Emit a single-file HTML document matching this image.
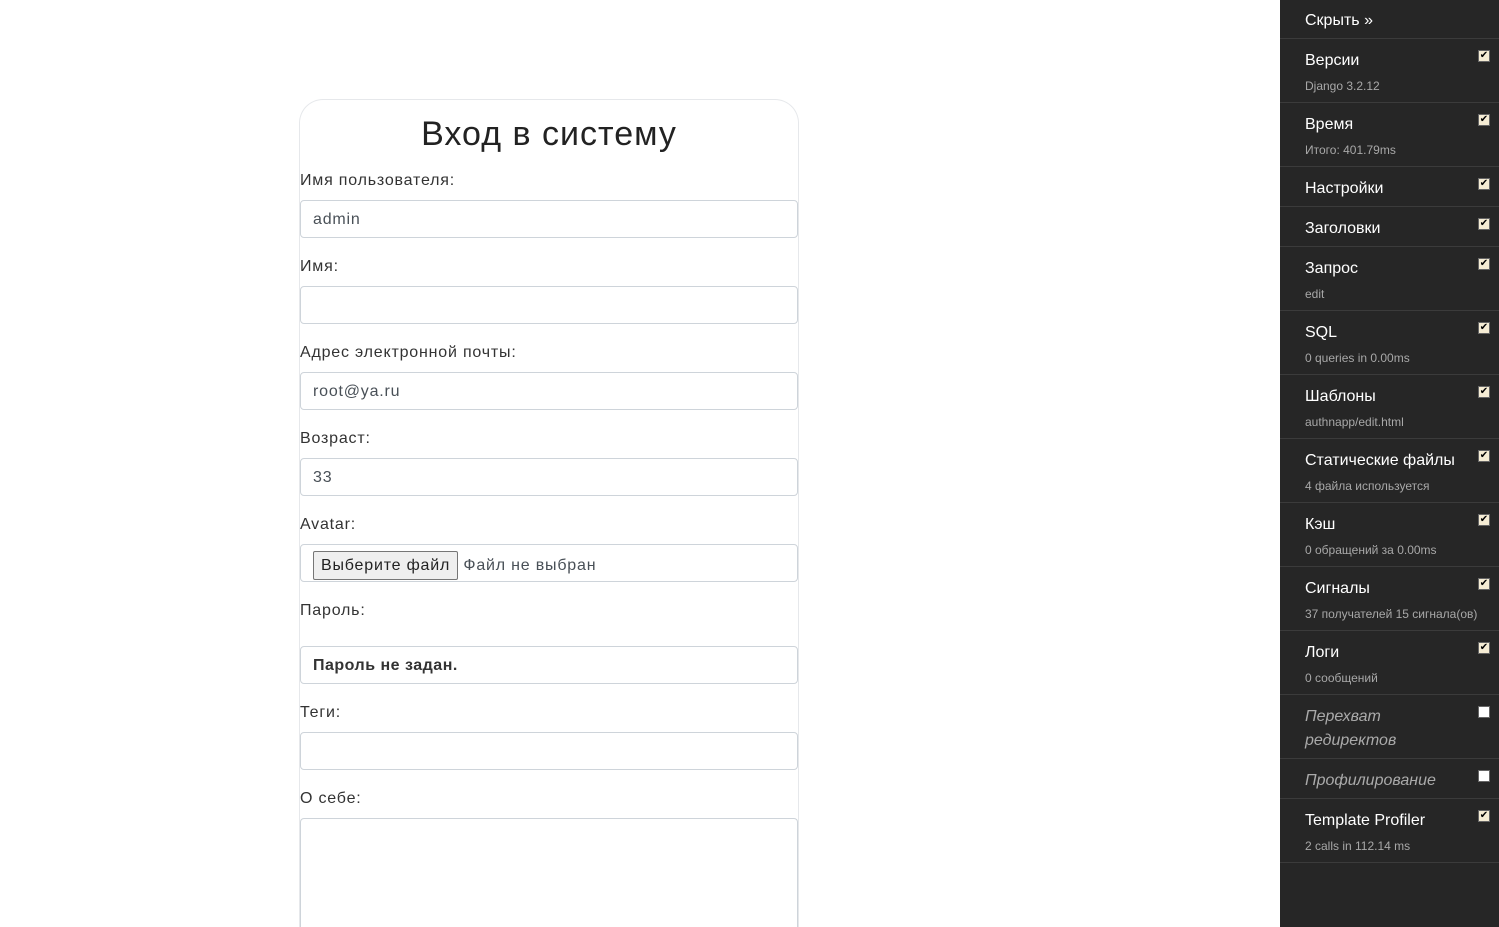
<!DOCTYPE html>
<html><head><meta charset="utf-8"><style>
*{box-sizing:border-box;margin:0;padding:0}
html,body{width:1499px;height:927px;overflow:hidden}
body{background:#fff;font-family:"Liberation Sans",sans-serif;position:relative}
.card{position:absolute;left:299px;top:99px;width:500px;height:828px;border:1px solid #e6e8eb;border-bottom:none;border-radius:24px 24px 0 0}
h1{position:absolute;left:299px;width:500px;top:113px;text-align:center;font-weight:400;font-size:34px;letter-spacing:1px;color:#222;line-height:42px}
.lbl{position:absolute;left:300px;font-size:16px;letter-spacing:0.8px;color:#333;line-height:24px}
.inp{position:absolute;left:300px;width:498px;height:38px;border:1px solid #ced4da;border-radius:4px;background:#fff;font-size:16px;letter-spacing:0.8px;color:#495057;padding-left:12px;line-height:38px}
.btn{display:inline-block;margin-top:6px;height:29px;border:1px solid #767676;border-radius:2px;background:#efefef;color:#222;padding:0 7px;line-height:27px;vertical-align:top}
.sb{position:absolute;left:1280px;top:0;width:219px;height:927px;background:#262626;color:#fff}
.row{position:absolute;left:0;width:219px;border-bottom:1px solid #3b3b3b}
.t{position:absolute;left:25px;font-size:16px;line-height:24px;color:#fff}
.s{position:absolute;left:25px;font-size:12px;color:#a8a8a8;line-height:16px}
.cb{position:absolute;left:198px;width:12px;height:12px;background:#f5ecd4;border:1px solid #666;font-size:10px;line-height:10px;text-align:center;color:#000}
.cb.e{background:#fff}
.i{font-style:italic;color:#aaa}
</style></head><body>
<div class="card"></div>
<h1>Вход в систему</h1>
<div class="lbl" style="top:169px">Имя пользователя:</div>
<div class="inp" style="top:200px">admin</div>
<div class="lbl" style="top:255px">Имя:</div>
<div class="inp" style="top:286px"></div>
<div class="lbl" style="top:341px">Адрес электронной почты:</div>
<div class="inp" style="top:372px">root@ya.ru</div>
<div class="lbl" style="top:427px">Возраст:</div>
<div class="inp" style="top:458px">33</div>
<div class="lbl" style="top:513px">Avatar:</div>
<div class="inp" style="top:544px;line-height:normal"><span class="btn">Выберите файл</span> <span style="display:inline-block;margin-top:6px;line-height:29px">Файл не выбран</span></div>
<div class="lbl" style="top:599px">Пароль:</div>
<div class="inp" style="top:646px;font-weight:bold;color:#333;letter-spacing:0.5px">Пароль не задан.</div>
<div class="lbl" style="top:701px">Теги:</div>
<div class="inp" style="top:732px"></div>
<div class="lbl" style="top:787px">О себе:</div>
<div class="inp" style="top:818px;height:109px;border-bottom:none;border-radius:4px 4px 0 0"></div>

<div class="sb">
<div class="row" style="top:0;height:39px"><div class="t" style="top:9px">Скрыть »</div></div>
<div class="row" style="top:39px;height:64px"><div class="t" style="top:10px">Версии</div><div class="s" style="top:39px">Django 3.2.12</div><div class="cb" style="top:11px">✔</div></div>
<div class="row" style="top:103px;height:64px"><div class="t" style="top:10px">Время</div><div class="s" style="top:39px">Итого: 401.79ms</div><div class="cb" style="top:11px">✔</div></div>
<div class="row" style="top:167px;height:40px"><div class="t" style="top:10px">Настройки</div><div class="cb" style="top:11px">✔</div></div>
<div class="row" style="top:207px;height:40px"><div class="t" style="top:10px">Заголовки</div><div class="cb" style="top:11px">✔</div></div>
<div class="row" style="top:247px;height:64px"><div class="t" style="top:10px">Запрос</div><div class="s" style="top:39px">edit</div><div class="cb" style="top:11px">✔</div></div>
<div class="row" style="top:311px;height:64px"><div class="t" style="top:10px">SQL</div><div class="s" style="top:39px">0 queries in 0.00ms</div><div class="cb" style="top:11px">✔</div></div>
<div class="row" style="top:375px;height:64px"><div class="t" style="top:10px">Шаблоны</div><div class="s" style="top:39px">authnapp/edit.html</div><div class="cb" style="top:11px">✔</div></div>
<div class="row" style="top:439px;height:64px"><div class="t" style="top:10px">Статические файлы</div><div class="s" style="top:39px">4 файла используется</div><div class="cb" style="top:11px">✔</div></div>
<div class="row" style="top:503px;height:64px"><div class="t" style="top:10px">Кэш</div><div class="s" style="top:39px">0 обращений за 0.00ms</div><div class="cb" style="top:11px">✔</div></div>
<div class="row" style="top:567px;height:64px"><div class="t" style="top:10px">Сигналы</div><div class="s" style="top:39px">37 получателей 15 сигнала(ов)</div><div class="cb" style="top:11px">✔</div></div>
<div class="row" style="top:631px;height:64px"><div class="t" style="top:10px">Логи</div><div class="s" style="top:39px">0 сообщений</div><div class="cb" style="top:11px">✔</div></div>
<div class="row" style="top:695px;height:64px"><div class="t i" style="top:10px">Перехват<br>редиректов</div><div class="cb e" style="top:11px"></div></div>
<div class="row" style="top:759px;height:40px"><div class="t i" style="top:10px">Профилирование</div><div class="cb e" style="top:11px"></div></div>
<div class="row" style="top:799px;height:64px"><div class="t" style="top:10px">Template Profiler</div><div class="s" style="top:39px">2 calls in 112.14 ms</div><div class="cb" style="top:11px">✔</div></div>
</div>
</body></html>
